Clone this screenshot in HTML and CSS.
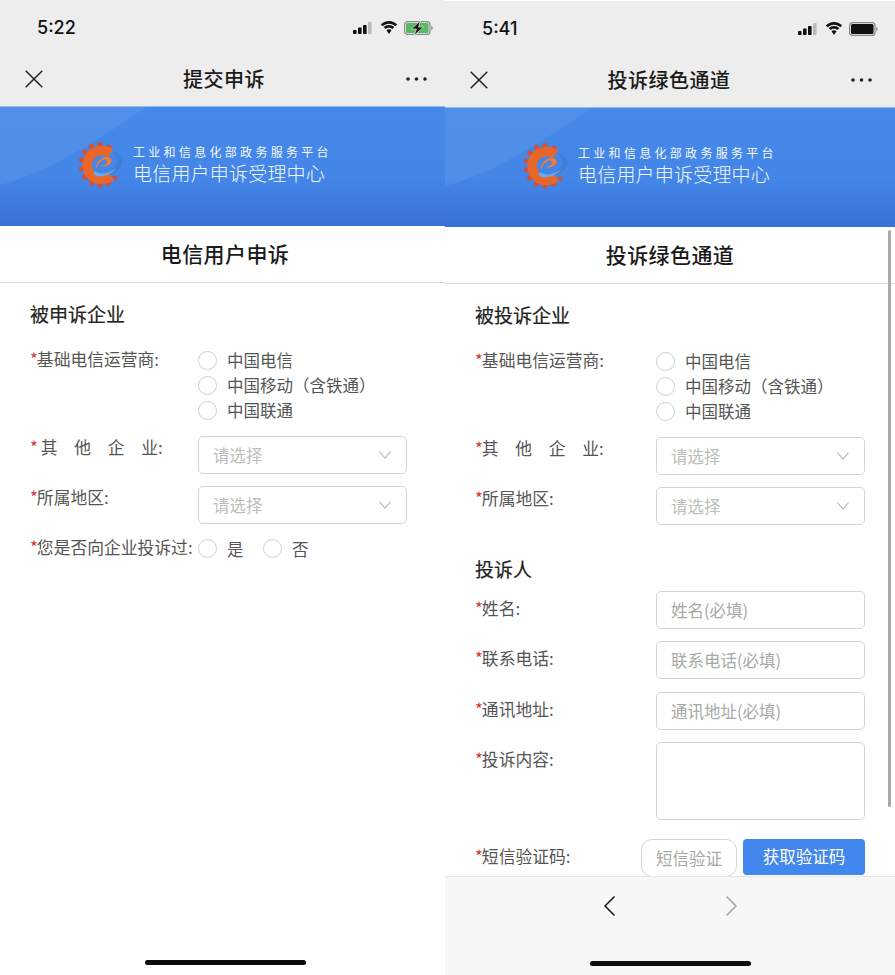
FILE: index.html
```html
<!DOCTYPE html>
<html lang="zh-CN">
<head>
<meta charset="utf-8">
<title>电信用户申诉</title>
<link rel="stylesheet" href="styles.css">
</head>
<body>
<svg class="defs" aria-hidden="true">
  <symbol id="logo" viewBox="0 0 46 46">
    <g fill="#c9533f">
      <circle cx="21" cy="2.800" r="2.700"/><circle cx="12.500" cy="4.500" r="2.700"/><circle cx="30" cy="5" r="2.500"/>
      <circle cx="5.800" cy="10" r="2.700"/><circle cx="2.200" cy="18" r="2.500"/><circle cx="2" cy="27" r="2.500"/>
      <circle cx="5.800" cy="35" r="2.700"/><circle cx="12.500" cy="41" r="2.700"/><circle cx="21" cy="43" r="2.700"/>
      <circle cx="29.500" cy="41" r="2.700"/><circle cx="36" cy="36" r="2.500"/>
    </g>
    <path d="M41 15C44 18 44 22 41 26c-4 5-11 8-21 8 7-2 13-5 16-9 3-4 3-8 0-12-1-2-3-3-4-4 4 0 7 3 9 6z" fill="#3d7fd4"/>
    <path d="M31.500 11.500A14.500 14.500 0 1 0 32 34" fill="none" stroke="#e9662b" stroke-width="9.500"/>
    <path d="M17 28c-1-7 4-13 11-13 5 0 6 4 3 7-3 2-7 3-9 2 3-1 6-2 6-4 0-2-2-3-4-2-4 2-6 5-7 10z" fill="#ef7d38"/>
    <path d="M16 29c5 4 14 3 21-3-5 8-16 10-22 7-1-1 0-3 1-4z" fill="#6ea8e8"/>
  </symbol>
  <symbol id="signal" viewBox="0 0 19 12">
    <rect x="0" y="8" width="3.600" height="4" rx=".7" fill="#111"/>
    <rect x="5" y="5.500" width="3.600" height="6.500" rx=".7" fill="#111"/>
    <rect x="10" y="3" width="3.600" height="9" rx=".7" fill="#111"/>
    <rect x="15" y="0" width="3.600" height="12" rx=".7" fill="#bbb"/>
  </symbol>
  <symbol id="wifi" viewBox="0 0 18 13">
    <path d="M9 2.800c2.500 0 4.600 1 6.300 2.500L17.200 3.400C15 1.300 12.200 0 9 0S3 1.300.8 3.400l1.900 1.900C4.400 3.800 6.500 2.800 9 2.800z" fill="#111"/>
    <path d="M9 6.700c1.300 0 2.500.5 3.500 1.300l1.800-1.900C12.900 4.900 11 4.100 9 4.100S5.100 4.900 3.700 6.100L5.500 8c1-.8 2.200-1.300 3.500-1.300z" fill="#111"/>
    <path d="M9 8.200c-1 0-1.900.4-2.500 1L9 13l2.500-3.800c-.6-.6-1.500-1-2.500-1z" fill="#111"/>
  </symbol>
  <symbol id="close" viewBox="0 0 18 18">
    <path d="M.7.700l16.600 16.600M17.300.700L.7 17.300" fill="none" stroke="#222" stroke-width="1.500"/>
  </symbol>
  <symbol id="more" viewBox="0 0 21 4">
    <circle cx="2" cy="2" r="1.800" fill="#222"/><circle cx="10.500" cy="2" r="1.800" fill="#222"/><circle cx="19" cy="2" r="1.800" fill="#222"/>
  </symbol>
  <symbol id="caret" viewBox="0 0 12 8">
    <path d="M.5.700l5.500 6.500 5.500-6.500" fill="none" stroke="#bdbdbd" stroke-width="1.200"/>
  </symbol>
</svg>

<section class="phone phone-left">
  <div class="phone-inner">
    <header class="top">
      <div class="status">
        <span class="time">5:22</span>
        <span class="status-icons">
          <svg class="ic-signal"><use href="#signal"/></svg>
          <svg class="ic-wifi"><use href="#wifi"/></svg>
          <svg class="ic-battery" viewBox="0 0 29 14">
            <rect x=".6" y=".6" width="25.400" height="12.800" rx="3" fill="none" stroke="#8a8a8a" stroke-width="1.200"/>
            <rect x="2" y="2" width="22.600" height="10" rx="1.600" fill="#55b95f"/>
            <path d="M27.200 5v4c1 0 1.500-1 1.500-2s-.5-2-1.500-2z" fill="#8a8a8a"/>
            <path d="M16.500-.5L7.500 8h5L10 14.500 19.500 6H14.500z" fill="#111" stroke="#ededed" stroke-width=".7"/>
          </svg>
        </span>
      </div>
      <nav class="nav">
        <svg class="ic-close"><use href="#close"/></svg>
        <h1 class="nav-title">提交申诉</h1>
        <svg class="ic-more"><use href="#more"/></svg>
      </nav>
    </header>
    <div class="banner">
      <svg class="banner-sheen" viewBox="0 0 450 120" preserveAspectRatio="none" aria-hidden="true"><path d="M0 0H147C105 27 60 62 0 79z" fill="#fff" fill-opacity=".06"/></svg>
      <svg class="logo"><use href="#logo"/></svg>
      <div class="banner-text">
        <p class="banner-sub">工业和信息化部政务服务平台</p>
        <p class="banner-main">电信用户申诉受理中心</p>
      </div>
    </div>
    <h2 class="page-title">电信用户申诉</h2>
    <main class="form form-left">
      <h3 class="section">被申诉企业</h3>
      <div class="rows">
        <div class="row">
          <div class="label"><i>*</i>基础电信运营商:</div>
          <div class="radios">
            <div class="radio"><b></b>中国电信</div>
            <div class="radio"><b></b>中国移动（含铁通）</div>
            <div class="radio"><b></b>中国联通</div>
          </div>
        </div>
        <div class="row">
          <div class="label"><i>*</i><span class="spaced">其他企</span>业:</div>
          <div class="select"><span>请选择</span><svg class="ic-caret"><use href="#caret"/></svg></div>
        </div>
        <div class="row">
          <div class="label"><i>*</i>所属地区:</div>
          <div class="select"><span>请选择</span><svg class="ic-caret"><use href="#caret"/></svg></div>
        </div>
        <div class="row">
          <div class="label"><i>*</i>您是否向企业投诉过:</div>
          <div class="radios radios-inline">
            <div class="radio"><b></b>是</div>
            <div class="radio"><b></b>否</div>
          </div>
        </div>
      </div>
    </main>
    <footer class="home home-left"><span class="home-bar"></span></footer>
  </div>
</section>

<section class="phone phone-right">
  <div class="phone-inner">
    <header class="top">
      <div class="status">
        <span class="time">5:41</span>
        <span class="status-icons">
          <svg class="ic-signal"><use href="#signal"/></svg>
          <svg class="ic-wifi"><use href="#wifi"/></svg>
          <svg class="ic-battery" viewBox="0 0 29 14">
            <rect x=".6" y=".6" width="25.400" height="12.800" rx="3" fill="none" stroke="#8a8a8a" stroke-width="1.200"/>
            <rect x="2" y="2" width="22.600" height="10" rx="1.600" fill="#111"/>
            <path d="M27.200 5v4c1 0 1.500-1 1.500-2s-.5-2-1.500-2z" fill="#8a8a8a"/>
          </svg>
        </span>
      </div>
      <nav class="nav">
        <svg class="ic-close"><use href="#close"/></svg>
        <h1 class="nav-title">投诉绿色通道</h1>
        <svg class="ic-more"><use href="#more"/></svg>
      </nav>
    </header>
    <div class="banner">
      <svg class="banner-sheen" viewBox="0 0 450 120" preserveAspectRatio="none" aria-hidden="true"><path d="M0 0H147C105 27 60 62 0 79z" fill="#fff" fill-opacity=".06"/></svg>
      <svg class="logo"><use href="#logo"/></svg>
      <div class="banner-text">
        <p class="banner-sub">工业和信息化部政务服务平台</p>
        <p class="banner-main">电信用户申诉受理中心</p>
      </div>
    </div>
    <h2 class="page-title">投诉绿色通道</h2>
    <main class="form form-right">
      <h3 class="section">被投诉企业</h3>
      <div class="rows">
        <div class="row">
          <div class="label"><i>*</i>基础电信运营商:</div>
          <div class="radios">
            <div class="radio"><b></b>中国电信</div>
            <div class="radio"><b></b>中国移动（含铁通）</div>
            <div class="radio"><b></b>中国联通</div>
          </div>
        </div>
        <div class="row">
          <div class="label"><i>*</i><span class="spaced">其他企</span>业:</div>
          <div class="select"><span>请选择</span><svg class="ic-caret"><use href="#caret"/></svg></div>
        </div>
        <div class="row">
          <div class="label"><i>*</i>所属地区:</div>
          <div class="select"><span>请选择</span><svg class="ic-caret"><use href="#caret"/></svg></div>
        </div>
      </div>
      <h3 class="section section-second">投诉人</h3>
      <div class="rows rows-contact">
        <div class="row">
          <div class="label label-low"><i>*</i>姓名:</div>
          <div class="field"><span>姓名(必填)</span></div>
        </div>
        <div class="row">
          <div class="label label-low"><i>*</i>联系电话:</div>
          <div class="field"><span>联系电话(必填)</span></div>
        </div>
        <div class="row">
          <div class="label label-low"><i>*</i>通讯地址:</div>
          <div class="field"><span>通讯地址(必填)</span></div>
        </div>
        <div class="row">
          <div class="label label-low"><i>*</i>投诉内容:</div>
          <div class="field field-area"></div>
        </div>
        <div class="row row-sms">
          <div class="label label-low label-sms"><i>*</i>短信验证码:</div>
          <div class="field field-sms"><span>短信验证</span></div>
          <div class="sms-button">获取验证码</div>
        </div>
      </div>
    </main>
    <footer class="home home-right">
      <div class="browser-nav">
        <svg class="ic-chevron" viewBox="0 0 11 20"><path d="M10.500.500L1 10l9.500 9.500" fill="none" stroke="#111" stroke-width="1.500"/></svg>
        <svg class="ic-chevron" viewBox="0 0 11 20"><path d="M.500.500L10 10 .500 19.500" fill="none" stroke="#a3a3a3" stroke-width="1.500"/></svg>
      </div>
      <span class="home-bar"></span>
    </footer>
    <div class="scrollbar"></div>
  </div>
</section>
</body>
</html>
```

FILE: styles.css
```css
* { box-sizing: border-box; }
html, body { margin: 0; padding: 0; background: #fff; }
body {
  display: flex;
  width: 895px;
  height: 975px;
  overflow: hidden;
  font-family: "Noto Sans CJK SC", "Noto Sans", sans-serif;
  color: #555;
}
.defs { display: none; }
h1, h2, h3, p { margin: 0; }

.phone { height: 975px; overflow: hidden; flex: none; }
.phone-left { width: 445px; }
.phone-right { width: 450px; padding-top: 1px; }
.phone-inner {
  position: relative;
  width: 450px;
  height: 100%;
  display: flex;
  flex-direction: column;
}

.top { background: #ededed; flex: none; height: 105.500px; display: flex; flex-direction: column; }
.status {
  height: 53px;
  padding: 2px 12px 0 37px;
  display: flex;
  align-items: center;
  justify-content: space-between;
  flex: none;
}
.time { font-family: Inter, "Liberation Sans", sans-serif; font-size: 18px; font-weight: 500; color: #111; }
.status-icons { display: flex; align-items: center; padding-right: 5px; }
.ic-signal { width: 19px; height: 12px; margin-right: 8px; }
.ic-wifi { width: 18px; height: 13px; margin-right: 6px; }
.ic-battery { width: 29px; height: 14px; }

.nav {
  height: 52.500px;
  padding: 0 23px 0 21px;
  display: grid;
  grid-template-columns: 1fr auto 1fr;
  align-items: center;
}
.ic-close { width: 18px; height: 18px; margin-left: 4px; }
.ic-more { width: 21px; height: 4px; justify-self: end; }
.nav-title { font-size: 20px; line-height: 28px; font-weight: 500; color: #1a1a1a; letter-spacing: .5px; }

.banner {
  position: relative;
  flex: none;
  height: 120px;
  padding: 35px 0 0 79px;
  display: flex;
  align-items: flex-start;
  background: linear-gradient(#4689e9 0%, #4386e7 60%, #3771d7 100%);
  border-top: 1px solid #8dbbf2;
}
.banner-sheen { position: absolute; left: 0; top: 0; width: 100%; height: 100%; }
.logo { position: relative; width: 46px; height: 46px; margin-right: 8px; }
.banner-text { position: relative; color: #f2f7fe; padding-top: 2px; }
.banner-sub { font-size: 12px; line-height: 16px; letter-spacing: 3.300px; }
.banner-main { font-size: 19px; line-height: 26px; letter-spacing: .2px; font-weight: 300; margin-top: 0; }

.page-title {
  flex: none;
  height: 57.500px;
  border-bottom: 1px solid #dcdcdc;
  font-size: 21px;
  line-height: 55px;
  font-weight: 500;
  letter-spacing: .4px;
  text-align: center;
  color: #1a1a1a;
}

.form { flex: 1; min-height: 0; overflow: hidden; padding: 19px 30px 0; }
.section { font-size: 19px; line-height: 24px; font-weight: 400; color: #222; -webkit-text-stroke: .2px #222; }
.section-second { margin-top: 32px; }
.rows { margin-top: 22px; display: flex; flex-direction: column; gap: 12.300px; }
.rows-contact { margin-top: 10px; gap: 12.300px; }
.row { display: flex; align-items: flex-start; }
.label { flex: none; font-size: 16.800px; line-height: 24px; margin-top: -1px; color: #555; white-space: nowrap; }
.form-left .label { width: 168px; }
.form-right .label { width: 181px; }
.label i { color: #d33a32; font-style: normal; margin-right: -1px; }
.spaced { letter-spacing: 16.700px; margin-left: 4px; }
.form-right .spaced { margin-left: 0; }
.label-low { padding-top: 6px; }

.radios { display: flex; flex-direction: column; }
.radios-inline { flex-direction: row; gap: 19.500px; }
.radio { display: flex; align-items: center; height: 25.200px; padding-bottom: 1px; font-size: 16.500px; color: #555; white-space: nowrap; }
.radio b {
  width: 19px;
  height: 19px;
  margin-right: 10px;
  border: 1px solid #d0d0d0;
  border-radius: 50%;
  background: #fff;
  flex: none;
}

.select, .field {
  width: 209px;
  height: 38px;
  padding: 0 14px;
  display: flex;
  align-items: center;
  justify-content: space-between;
  border: 1px solid #d5d5d5;
  border-radius: 5px;
  font-size: 16.500px;
}
.select span { color: #bdbdbd; }
.field span { color: #a8a8a8; white-space: nowrap; }
.ic-caret { width: 12px; height: 8px; margin-right: 1px; }
.field-area { height: 78px; }
.row-sms { margin-top: 6.600px; }
.form-right .label-sms { width: 166px; }
.field-sms { width: 96px; border-radius: 11px; }
.sms-button {
  width: 122px;
  height: 36px;
  margin-left: 6px;
  background: #4287ee;
  border-radius: 4px;
  color: #fff;
  font-size: 16.500px;
  line-height: 35px;
  text-align: center;
}

.home { flex: none; display: flex; flex-direction: column; align-items: center; }
.home-left { padding: 0 0 10px; }
.home-right {
  height: 99px;
  padding-bottom: 9px;
  background: #f7f7f7;
  border-top: 1px solid #e6e6e6;
  justify-content: flex-end;
  position: relative;
}
.browser-nav { display: flex; gap: 111px; margin: 0 0 auto; padding-top: 19px; }
.ic-chevron { width: 11px; height: 20px; }
.home-bar { width: 161px; height: 5px; border-radius: 3px; background: #0c0c0c; }
.scrollbar {
  position: absolute;
  left: 443px;
  top: 229px;
  width: 3px;
  height: 577px;
  border-radius: 2px;
  background: #a9a9a9;
}
```
